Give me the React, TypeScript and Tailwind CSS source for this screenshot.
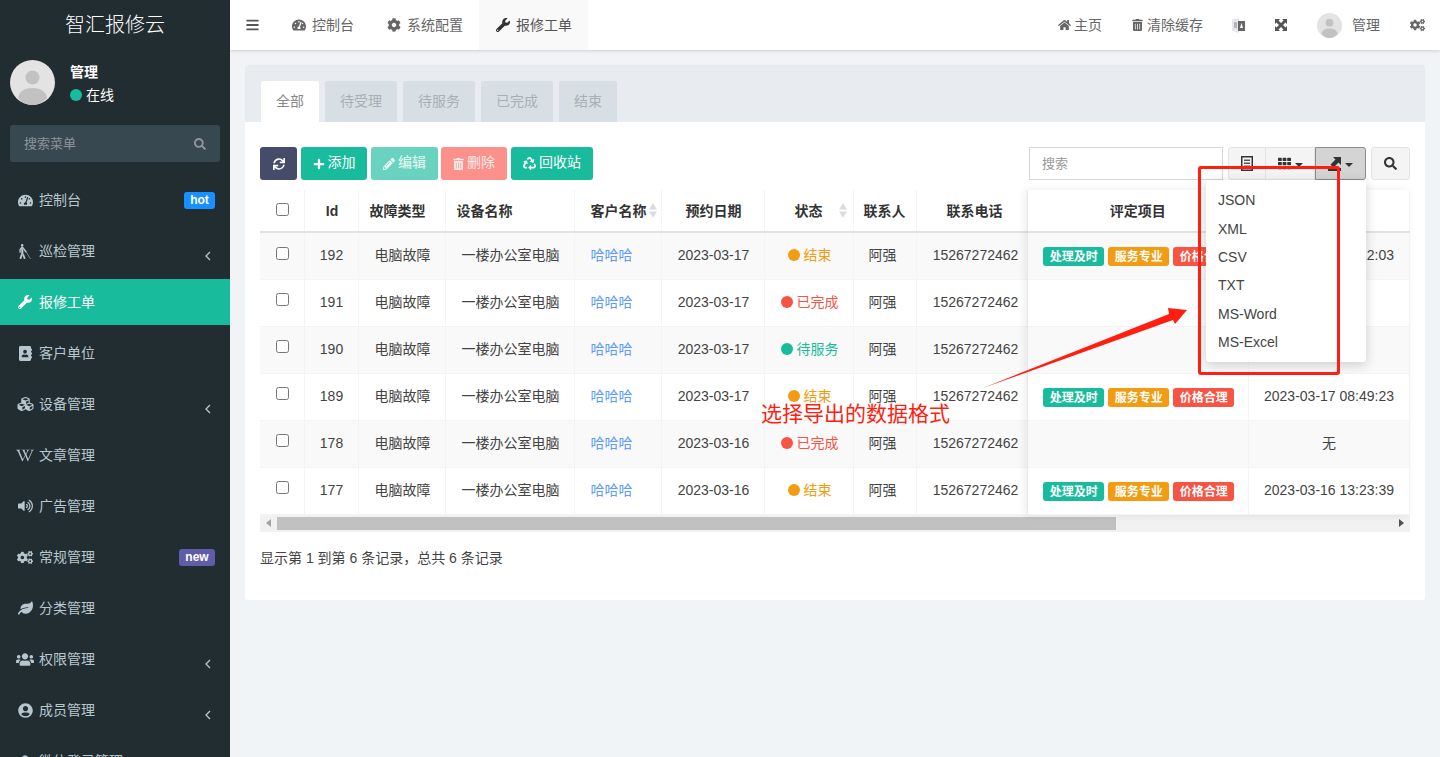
import {
  FaAddressBook,
  FaBars,
  FaBlind,
  FaCog,
  FaCogs,
  FaCubes,
  FaHome,
  FaLeaf,
  FaPencilAlt,
  FaPlus,
  FaRecycle,
  FaSearch,
  FaSync,
  FaTachometerAlt,
  FaTh,
  FaTrashAlt,
  FaUserCircle,
  FaUsers,
  FaVolumeUp,
  FaWikipediaW,
  FaWrench,
} from "react-icons/fa";

const menu = [
  { name: "控制台", Icon: FaTachometerAlt, size: "w-[15px] h-[15px]", badge: "hot" },
  { name: "巡检管理", Icon: FaBlind, size: "w-[14px] h-[15px]", arrow: true },
  { name: "报修工单", Icon: FaWrench, size: "w-[14px] h-[14px]", active: true },
  { name: "客户单位", Icon: FaAddressBook, size: "w-[13px] h-[15px]" },
  { name: "设备管理", Icon: FaCubes, size: "w-[17px] h-[16px]", arrow: true },
  { name: "文章管理", Icon: FaWikipediaW, size: "w-[18px] h-[15px]" },
  { name: "广告管理", Icon: FaVolumeUp, size: "w-[15px] h-[14px]" },
  { name: "常规管理", Icon: FaCogs, size: "w-[16px] h-[15px]", badge: "new" },
  { name: "分类管理", Icon: FaLeaf, size: "w-[15px] h-[14px]" },
  { name: "权限管理", Icon: FaUsers, size: "w-[18px] h-[17px]", arrow: true },
  { name: "成员管理", Icon: FaUserCircle, size: "w-[15px] h-[15px]", arrow: true },
  { name: "微信登录管理", Icon: FaUsers, size: "w-[18px] h-[17px]", arrow: true },
];

const rows = [
  { id: 192, date: "2023-03-17", status: "结束", tags: true, time: "2023-03-17 09:12:03" },
  { id: 191, date: "2023-03-17", status: "已完成", tags: false, time: "" },
  { id: 190, date: "2023-03-17", status: "待服务", tags: false, time: "" },
  { id: 189, date: "2023-03-17", status: "结束", tags: true, time: "2023-03-17 08:49:23" },
  { id: 178, date: "2023-03-16", status: "已完成", tags: false, time: "无" },
  { id: 177, date: "2023-03-16", status: "结束", tags: true, time: "2023-03-16 13:23:39" },
];

const statusColor: Record<string, string> = {
  结束: "text-[#f39c12]",
  已完成: "text-[#f75444]",
  待服务: "text-[#18bc9c]",
};

const dotColor: Record<string, string> = {
  结束: "bg-[#f39c12]",
  已完成: "bg-[#f75444]",
  待服务: "bg-[#18bc9c]",
};

function Avatar({ className }: { className: string }) {
  return (
    <svg viewBox="0 0 45 45" className={className}>
      <circle cx="22.5" cy="22.5" r="22.5" fill="#e3e3e3" />
      <circle cx="22.5" cy="17.500" r="7" fill="#c2c2c2" />
      <path d="M8 38c1-7 7-10 14.500-10S36 31 37 38c-4 4.500-9 7-14.500 7S12 42.500 8 38z" fill="#c2c2c2" />
    </svg>
  );
}

function SortIcon() {
  return (
    <svg viewBox="0 0 8 15" className="w-2 h-[15px] shrink-0">
      <path d="M4 0 8 6.500H0z" fill="#dcdcdc" />
      <path d="M4 15 0 8.500H8z" fill="#dcdcdc" />
    </svg>
  );
}

function Caret() {
  return (
    <svg viewBox="0 0 8 4" className="w-2 h-1 mt-[2px]">
      <path d="M0 0h8L4 4z" fill="#333" />
    </svg>
  );
}

function Sidebar() {
  return (
    <aside className="w-[230px] shrink-0 h-full bg-[#222d32] overflow-hidden">
      <div className="h-[50px] flex items-center justify-center text-white text-[20px] font-light">智汇报修云</div>
      <div className="h-[45px] mt-[10px] px-[10px] flex items-center gap-[15px]">
        <Avatar className="w-[45px] h-[45px]" />
        <div className="text-white text-sm pt-[2px]">
          <div className="font-bold leading-[20px] mb-[3px]">管理</div>
          <div className="flex items-center gap-[4px] leading-[20px]">
            <span className="w-3 h-3 rounded-full bg-[#18bc9c]" />
            在线
          </div>
        </div>
      </div>
      <div className="mx-[10px] mt-[20px] h-[37px] rounded-[3px] bg-[#374850] flex items-center justify-between px-[14px] text-[13px] text-[#8b959b]">
        搜索菜单
        <FaSearch className="w-3 h-3" />
      </div>
      <nav className="mt-[15px]">
        {menu.map(({ name, Icon, size, badge, arrow, active }) => (
          <div
            key={name}
            className={`h-[46px] mb-[5px] flex items-center pl-[16px] pr-[15px] text-sm ${active ? "bg-[#18bc9c] text-white" : "text-[#b8c7ce]"}`}
          >
            <span className="w-[18px] flex justify-center shrink-0">
              <Icon className={size} />
            </span>
            <span className="ml-[5px] flex-1">{name}</span>
            {badge === "hot" && (
              <span className="h-[17px] w-[31px] rounded-[3px] bg-[#1890ff] text-white text-xs font-bold flex items-center justify-center">hot</span>
            )}
            {badge === "new" && (
              <span className="h-[17px] w-[36px] rounded-[3px] bg-[#605ca8] text-white text-xs font-bold flex items-center justify-center">new</span>
            )}
            {arrow && (
              <svg viewBox="0 0 6 10" className="w-[6px] h-[10px] mr-[4px] mt-[9px]">
                <path d="M5 1 1 5l4 4" fill="none" stroke="currentColor" strokeWidth="1.3" />
              </svg>
            )}
          </div>
        ))}
      </nav>
    </aside>
  );
}

function TopNav() {
  return (
    <header className="h-[50px] shrink-0 bg-white shadow-[0_1px_3px_rgba(0,0,0,0.15)] flex items-center text-sm text-[#666] relative">
      <FaBars className="w-[13px] h-[14px] ml-[16px] mr-[33px] text-[#555]" />
      <div className="flex items-center gap-[6px] mr-[33px]">
        <FaTachometerAlt className="w-[14px] h-[14px]" />
        控制台
      </div>
      <div className="flex items-center gap-[6px] mr-[16px]">
        <FaCog className="w-[14px] h-[14px]" />
        系统配置
      </div>
      <div className="h-full w-[109px] bg-[#f9f9f9] pl-[17px] flex items-center gap-[6px] text-[#555]">
        <FaWrench className="w-[14px] h-[14px] text-[#333]" />
        报修工单
      </div>
      <div className="ml-auto flex items-center pr-[15px]">
        <FaHome className="w-[13px] h-[12px] mr-[3px]" />
        <span className="mr-[30px]">主页</span>
        <FaTrashAlt className="w-[11px] h-[12px] mr-[4px]" />
        <span className="mr-[29px]">清除缓存</span>
        {/* translate icon */}
        <svg viewBox="0 0 13 15" className="w-[13px] h-[15px] mr-[30px]">
          <path d="M0 1.500 7 0v15L0 13z" fill="#e6e6ee" />
          <path d="M6 3h7v10H6z" fill="#666" />
          <path d="M2 4h3v6H2z" fill="#b5b5bb" />
          <path d="M8 10l1.500-5L11 10z" fill="#fff" />
        </svg>
        {/* arrows-alt */}
        <svg viewBox="0 0 12 12" className="w-3 h-3 mr-[30px]">
          <path d="M0 0h5L3.500 1.500 6 4l2.500-2.500L7 0h5v5l-1.500-1.500L8 6l2.500 2.500L12 7v5H7l1.500-1.500L6 8l-2.500 2.500L5 12H0V7l1.500 1.500L4 6 1.500 3.500 0 5z" fill="#555" />
        </svg>
        <Avatar className="w-[25px] h-[25px] mr-[10px]" />
        <span className="mr-[30px]">管理</span>
        <FaCogs className="w-[15px] h-[14px]" />
      </div>
    </header>
  );
}

function Tabs() {
  const others = ["待受理", "待服务", "已完成", "结束"];
  return (
    <div className="h-[57px] bg-[#e8ecf0] rounded-t-[3px] pt-[16px] pl-[16px] flex items-end gap-[6px] text-sm">
      <div className="h-[41px] w-[58px] bg-white rounded-t-[2px] flex items-center justify-center pb-[2px] text-[#888]">全部</div>
      {others.map((t) => (
        <div key={t} className="h-[41px] px-[15px] pb-[2px] bg-[#d8dfe4] rounded-t-[2px] flex items-center text-[#a8b0b5]">
          {t}
        </div>
      ))}
    </div>
  );
}

function Toolbar() {
  const teal = "h-[33px] pb-[3px] rounded-[3px] bg-[#18bc9c] text-white text-sm flex items-center justify-center gap-[3px]";
  return (
    <div className="h-[33px] flex items-center">
      <button className="h-[33px] w-[37px] rounded-[3px] bg-[#444c69] text-white flex items-center justify-center mr-[4px]">
        <FaSync className="w-3 h-3" />
      </button>
      <button className={`${teal} w-[66px] mr-[4px]`}>
        <FaPlus className="w-3 h-3 mt-[3px]" />
        添加
      </button>
      <button className="h-[33px] w-[67px] mr-[3px] pb-[3px] rounded-[3px] bg-[#6ad3bf] text-[#eefbf8] text-sm flex items-center justify-center gap-[3px]">
        <FaPencilAlt className="w-3 h-3 mt-[3px]" />
        编辑
      </button>
      <button className="h-[33px] w-[66px] mr-[4px] pb-[3px] rounded-[3px] bg-[#fb918a] text-[#fdebe9] text-sm flex items-center justify-center gap-[3px]">
        <FaTrashAlt className="w-[11px] h-3 mt-[3px]" />
        删除
      </button>
      <button className={`${teal} w-[82px]`}>
        <FaRecycle className="w-[13px] h-[13px] mt-[3px]" />
        回收站
      </button>

      <div className="ml-auto h-[33px] w-[194px] border border-[#d2d6de] bg-white flex items-center px-[12px] text-[13px] text-[#999] mr-[5px]">搜索</div>
      <div className="relative flex h-[33px] text-[#333] mr-[5px]">
        <button className="w-[38px] bg-[#f4f4f4] border border-[#e3e3e3] rounded-l-[3px] flex items-center justify-center">
          <svg viewBox="0 0 12 15" className="w-3 h-[15px]">
            <path d="M0 0h12v15H0zM1.500 1.500v12h9v-12z" fill="#333" />
            <path d="M3 3.500h6V5H3zM3 6.500h6V8H3zM3 9.500h6V11H3z" fill="#555" />
          </svg>
        </button>
        <button className="w-[49px] bg-[#f4f4f4] border-y border-r border-[#e3e3e3] flex items-center justify-center gap-[4px]">
          <FaTh className="w-[13px] h-[13px]" />
          <Caret />
        </button>
        <button className="w-[51px] bg-[#d4d4d4] border border-[#8c8c8c] rounded-r-[3px] flex items-center justify-center gap-[4px]">
          <svg viewBox="0 0 13 14" className="w-[13px] h-[14px]">
            <path d="M0 11h13v3H0z" fill="#333" />
            <path d="M5 0h8v8l-2.500-2.500L5.500 10.500 2.500 7.500l5-5z" fill="#333" />
          </svg>
          <Caret />
        </button>
        <ul className="absolute top-[33px] right-0 w-[160px] h-[182px] bg-white rounded-b-[3px] shadow-[0_3px_12px_rgba(0,0,0,0.18)] z-20 pt-[6px] text-sm text-[#444]">
          {["JSON", "XML", "CSV", "TXT", "MS-Word", "MS-Excel"].map((f) => (
            <li key={f} className="h-[28.4px] px-[12px] flex items-center">
              {f}
            </li>
          ))}
        </ul>
      </div>
      <button className="h-[33px] w-[39px] bg-[#f4f4f4] border border-[#e3e3e3] rounded-[3px] flex items-center justify-center text-[#333]">
        <FaSearch className="w-[13px] h-[13px]" />
      </button>
    </div>
  );
}

function Tag({ color, children }: { color: string; children: string }) {
  return <span className={`h-[19px] w-[61px] rounded-[3px] text-xs font-bold text-white flex items-center justify-center ${color}`}>{children}</span>;
}

const headCell = "border-r border-[#f4f4f4] border-b-2 border-b-[#e2e2e2] font-bold text-[#333] text-sm p-0 bg-white";
const bodyCell = "border-r border-b border-[#f4f4f4] p-0 pb-[2px] text-sm";
const bodyText = `${bodyCell} text-center text-[#444]`;

function MainTable() {
  return (
    <table className="w-[767px] table-fixed border-collapse">
      <colgroup>
        <col className="w-[44px]" />
        <col className="w-[54px]" />
        <col className="w-[87px]" />
        <col className="w-[129px]" />
        <col className="w-[87px]" />
        <col className="w-[103px]" />
        <col className="w-[89px]" />
        <col className="w-[63px]" />
        <col className="w-[111px]" />
      </colgroup>
      <thead>
        <tr className="h-[42px]">
          <th className={`${headCell} pl-[1px]`}>
            <input type="checkbox" className="w-[13px] h-[13px] align-middle -translate-y-[2px]" />
          </th>
          <th className={`${headCell} pl-[2px]`}>Id</th>
          <th className={`${headCell} pr-[8px]`}>故障类型</th>
          <th className={`${headCell} text-left pl-[11px]`}>设备名称</th>
          <th className={headCell}>
            <div className="flex items-center pl-[16px] gap-[2px]">
              客户名称
              <SortIcon />
            </div>
          </th>
          <th className={`${headCell} pl-[2px]`}>预约日期</th>
          <th className={headCell}>
            <div className="flex items-center justify-between pl-[30px] pr-[6px]">
              状态
              <SortIcon />
            </div>
          </th>
          <th className={headCell}>联系人</th>
          <th className={`${headCell} pl-[6px]`}>联系电话</th>
        </tr>
      </thead>
      <tbody>
        {rows.map((r, i) => (
          <tr key={r.id} className={`h-[47px] ${i % 2 === 0 ? "bg-[#f9f9f9]" : "bg-white"}`}>
            <td className={`${bodyText} pl-[1px]`}>
              <input type="checkbox" className="w-[13px] h-[13px] align-middle -translate-y-[3px]" />
            </td>
            <td className={`${bodyText} pl-[1px]`}>{r.id}</td>
            <td className={`${bodyText} pl-[2px]`}>电脑故障</td>
            <td className={`${bodyText} pl-[2px]`}>一楼办公室电脑</td>
            <td className={`${bodyCell} text-left pl-[16px] text-[#5c9cff]`}>哈哈哈</td>
            <td className={`${bodyText} pl-[2px]`}>{r.date}</td>
            <td className={`${bodyText} pl-[2px]`}>
              <div className={`flex items-center justify-center gap-[4px] ${statusColor[r.status]}`}>
                <span className={`w-3 h-3 rounded-full ${dotColor[r.status]}`} />
                {r.status}
              </div>
            </td>
            <td className={`${bodyText} pr-[4px]`}>阿强</td>
            <td className={`${bodyText} pl-[8px]`}>15267272462</td>
          </tr>
        ))}
      </tbody>
    </table>
  );
}

function FixedTable() {
  return (
    <table className="w-[382px] table-fixed border-collapse shadow-[-3px_0_8px_rgba(0,0,0,0.08)] relative">
      <colgroup>
        <col className="w-[221px]" />
        <col className="w-[161px]" />
      </colgroup>
      <thead>
        <tr className="h-[42px]">
          <th className={headCell}>评定项目</th>
          <th className={headCell}>评定时间</th>
        </tr>
      </thead>
      <tbody>
        {rows.map((r, i) => (
          <tr key={r.id} className={`h-[47px] ${i % 2 === 0 ? "bg-[#f9f9f9]" : "bg-white"}`}>
            <td className={`${bodyText} pl-[2px]`}>
              {r.tags && (
                <div className="flex items-center justify-center gap-[4px] translate-y-[2px]">
                  <Tag color="bg-[#18bc9c]">处理及时</Tag>
                  <Tag color="bg-[#f39c12]">服务专业</Tag>
                  <Tag color="bg-[#f75444]">价格合理</Tag>
                </div>
              )}
            </td>
            <td className={bodyText}>{r.time}</td>
          </tr>
        ))}
      </tbody>
    </table>
  );
}

function Scrollbar() {
  return (
    <div className="h-[17px] bg-[#f1f1f1] flex items-center text-[#505050]">
      <span className="w-[17px] flex justify-center">
        <svg viewBox="0 0 5 8" className="w-[5px] h-2">
          <path d="M5 0v8L0 4z" fill="#a3a3a3" />
        </svg>
      </span>
      <div className="w-[839px] h-[13px] bg-[#c1c1c1]" />
      <span className="ml-auto w-[17px] flex justify-center">
        <svg viewBox="0 0 5 8" className="w-[5px] h-2">
          <path d="M0 0v8l5-4z" fill="#505050" />
        </svg>
      </span>
    </div>
  );
}

// red marks drawn on the screenshot
function Annotation() {
  return (
    <>
      <div className="absolute left-[1198px] top-[166px] w-[142px] h-[209px] border-[3px] border-[#ff1e0f] rounded-[3px] z-30" />
      <svg className="absolute left-[975px] top-[300px] w-[220px] h-[95px] z-30" viewBox="0 0 220 95">
        <path d="M8 88 194 14 193 8 212 10 200 24 198 20Z" fill="#ff1e0f" />
      </svg>
      <span className="absolute left-[761px] top-[401px] text-[21px] leading-[26px] text-[#ff1e0f] z-30">选择导出的数据格式</span>
    </>
  );
}

export default function App() {
  return (
    <div className="relative h-[757px] w-[1440px] overflow-hidden flex bg-[#f1f4f6] [font-family:'Liberation_Sans','Noto_Sans_CJK_SC',sans-serif]">
      <Sidebar />
      <main className="flex-1 flex flex-col min-w-0">
        <TopNav />
        <div className="p-[15px]">
          <section className="h-[535px] bg-white rounded-[3px]">
            <Tabs />
            <div className="px-[15px] pt-[25px]">
              <Toolbar />
              <div className="mt-[10px] flex">
                <MainTable />
                <FixedTable />
              </div>
              <Scrollbar />
              <p className="mt-[16px] text-sm leading-[20px] text-[#444]">显示第 1 到第 6 条记录，总共 6 条记录</p>
            </div>
          </section>
        </div>
      </main>
      <Annotation />
    </div>
  );
}
